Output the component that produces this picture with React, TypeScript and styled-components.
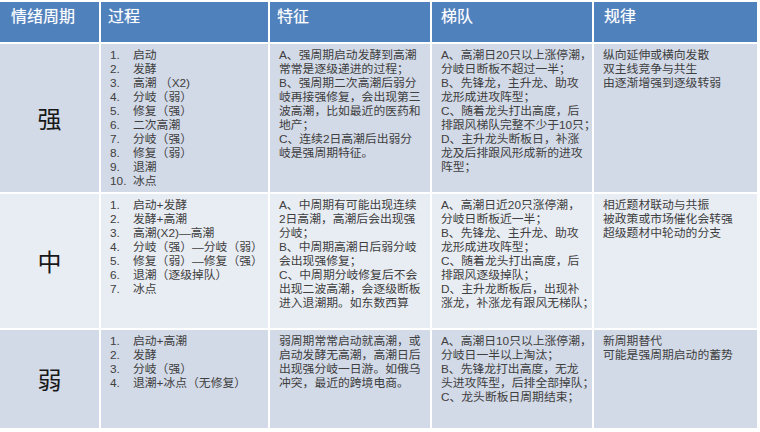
import React from 'react';
import styled, { createGlobalStyle } from 'styled-components';

const GlobalStyle = createGlobalStyle`
  html, body {
    margin: 0;
    padding: 0;
    background: #fff;
  }

  body {
    font-family: "Liberation Sans", "Noto Sans CJK SC", sans-serif;
  }
`;

const Table = styled.div`
  display: grid;
  grid-template-columns: 99px 167px 160px 160px 163px;
  grid-template-rows: 40px 148px 134px 98px;
  gap: 2px;
  width: 757px;
  padding-top: 2px;
  background: #fff;
`;

const HeaderCell = styled.div<{ $pad: number }>`
  background: #4f81bd;
  color: #fff;
  font-family: "Noto Sans CJK SC", sans-serif;
  font-size: 16px;
  line-height: 20px;
  padding: 3px 6px 0 ${(p) => p.$pad}px;
  text-shadow: 0 0 1px rgba(255, 255, 255, 0.5);
`;

const Cell = styled.div<{ $light: boolean }>`
  background: ${(p) => (p.$light ? '#e8ecf3' : '#d2d9e7')};
  color: #404040;
  font-family: "Liberation Sans", "Noto Sans CJK SC", sans-serif;
  font-size: 11.8px;
  line-height: 14px;
  padding: 4px 4px 0 9px;
`;

const LevelCell = styled(Cell)`
  display: flex;
  align-items: center;
  justify-content: center;
  padding: 0;
  color: #181818;
  font-family: "Noto Sans CJK SC", serif;
  font-size: 24px;
  line-height: 1;
`;

const StepList = styled.ol`
  list-style: none;
  margin: 0;
  padding: 0;
`;

const StepItem = styled.li`
  display: grid;
  grid-template-columns: 23px 1fr;
  white-space: nowrap;
`;

const Line = styled.div`
  white-space: nowrap;
`;

interface Row {
  level: string;
  steps: string[];
  features: string[];
  ladder: string[];
  rules: string[];
}

const headers = [
  { title: '情绪周期', pad: 11 },
  { title: '过程', pad: 7 },
  { title: '特征', pad: 7 },
  { title: '梯队', pad: 9 },
  { title: '规律', pad: 10 },
];

const rows: Row[] = [
  {
    level: '强',
    steps: ['启动', '发酵', '高潮 （X2)', '分岐（弱）', '修复（强）', '二次高潮', '分岐（强）', '修复（弱）', '退潮', '冰点'],
    features: [
      'A、强周期启动发酵到高潮',
      '常常是逐级递进的过程；',
      'B、强周期二次高潮后弱分',
      '岐再接强修复，会出现第三',
      '波高潮，比如最近的医药和',
      '地产；',
      'C、连续2日高潮后出弱分',
      '岐是强周期特征。',
    ],
    ladder: [
      'A、高潮日20只以上涨停潮，',
      '分岐日断板不超过一半；',
      'B、先锋龙，主升龙、助攻',
      '龙形成进攻阵型；',
      'C、随着龙头打出高度，后',
      '排跟风梯队完整不少于10只；',
      'D、主升龙头断板日，补涨',
      '龙及后排跟风形成新的进攻',
      '阵型；',
    ],
    rules: ['纵向延伸或横向发散', '双主线竞争与共生', '由逐渐增强到逐级转弱'],
  },
  {
    level: '中',
    steps: ['启动+发酵', '发酵+高潮', '高潮(X2)—高潮', '分岐（强）—分岐（弱）', '修复（弱）—修复（强）', '退潮（逐级掉队）', '冰点'],
    features: [
      'A、中周期有可能出现连续',
      '2日高潮，高潮后会出现强',
      '分岐；',
      'B、中周期高潮日后弱分岐',
      '会出现强修复；',
      'C、中周期分岐修复后不会',
      '出现二波高潮，会逐级断板',
      '进入退潮期。如东数西算',
    ],
    ladder: [
      'A、高潮日近20只涨停潮，',
      '分岐日断板近一半；',
      'B、先锋龙、主升龙、助攻',
      '龙形成进攻阵型；',
      'C、随着龙头打出高度，后',
      '排跟风逐级掉队；',
      'D、主升龙断板后，出现补',
      '涨龙，补涨龙有跟风无梯队；',
    ],
    rules: ['相近题材联动与共振', '被政策或市场催化会转强', '超级题材中轮动的分支'],
  },
  {
    level: '弱',
    steps: ['启动+高潮', '发酵', '分岐（强）', '退潮+冰点（无修复）'],
    features: [
      '弱周期常常启动就高潮，或',
      '启动发酵无高潮，高潮日后',
      '出现强分岐一日游。如俄乌',
      '冲突，最近的跨境电商。',
    ],
    ladder: [
      'A、高潮日10只以上涨停潮，',
      '分岐日一半以上淘汰；',
      'B、先锋龙打出高度，无龙',
      '头进攻阵型，后排全部掉队；',
      'C、龙头断板日周期结束；',
    ],
    rules: ['新周期替代', '可能是强周期启动的蓄势'],
  },
];

const Lines = ({ lines }: { lines: string[] }) => (
  <>
    {lines.map((text, i) => (
      <Line key={i}>{text}</Line>
    ))}
  </>
);

export default function App() {
  return (
    <>
      <GlobalStyle />
      <Table>
        {headers.map((h) => (
          <HeaderCell key={h.title} $pad={h.pad}>
            {h.title}
          </HeaderCell>
        ))}
        {rows.map((row, idx) => {
          const light = idx === 1;
          return (
            <React.Fragment key={row.level}>
              <LevelCell $light={light}>{row.level}</LevelCell>
              <Cell $light={light}>
                <StepList>
                  {row.steps.map((step, i) => (
                    <StepItem key={i}>
                      <span>{i + 1}.</span>
                      <span>{step}</span>
                    </StepItem>
                  ))}
                </StepList>
              </Cell>
              <Cell $light={light}>
                <Lines lines={row.features} />
              </Cell>
              <Cell $light={light}>
                <Lines lines={row.ladder} />
              </Cell>
              <Cell $light={light}>
                <Lines lines={row.rules} />
              </Cell>
            </React.Fragment>
          );
        })}
      </Table>
    </>
  );
}
